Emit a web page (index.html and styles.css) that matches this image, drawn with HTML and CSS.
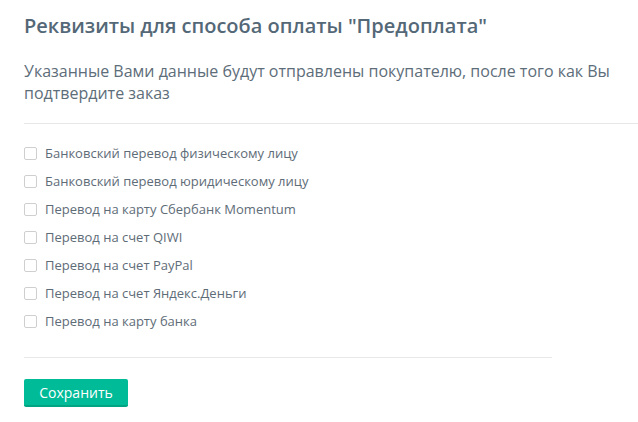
FILE: index.html
```html
<!DOCTYPE html>
<html lang="ru">
<head>
<meta charset="utf-8">
<link rel="stylesheet" href="styles.css">
</head>
<body>
<div class="page">
  <h1 class="title">Реквизиты для способа оплаты "Предоплата"</h1>
  <p class="lead">Указанные Вами данные будут отправлены покупателю, после того как Вы подтвердите заказ</p>
  <hr class="sep sep-full">
  <ul class="options">
    <li class="option"><span class="box"></span><span class="label">Банковский перевод физическому лицу</span></li>
    <li class="option"><span class="box"></span><span class="label">Банковский перевод юридическому лицу</span></li>
    <li class="option"><span class="box"></span><span class="label">Перевод на карту Сбербанк Momentum</span></li>
    <li class="option"><span class="box"></span><span class="label">Перевод на счет QIWI</span></li>
    <li class="option"><span class="box"></span><span class="label">Перевод на счет PayPal</span></li>
    <li class="option"><span class="box"></span><span class="label">Перевод на счет Яндекс.Деньги</span></li>
    <li class="option"><span class="box"></span><span class="label">Перевод на карту банка</span></li>
  </ul>
  <hr class="sep sep-short">
  <button class="save">Сохранить</button>
</div>
</body>
</html>
```
FILE: styles.css
```css
html, body {
  margin: 0;
  padding: 0;
  background: #fff;
}
body {
  font-family: "Open Sans", "Noto Sans", sans-serif;
  color: #5b6b77;
}
.page {
  padding: 12px 0 0 24px;
}
.title {
  margin: 0;
  font-size: 20px;
  font-weight: 600;
  color: #546877;
  line-height: 27px;
}
.lead {
  margin: 21px 0 0;
  font-size: 16px;
  line-height: 22px;
  color: #5d6d79;
  padding-right: 20px;
}
.sep {
  border: 0;
  height: 1px;
  background: #e8e8e8;
  margin: 0;
}
.sep-full {
  margin-top: 19px;
}
.sep-short {
  width: 528px;
  margin-top: 22px;
}
.options {
  list-style: none;
  margin: 15px 0 0;
  padding: 0;
  display: flex;
  flex-direction: column;
}
.option {
  display: flex;
  align-items: center;
  gap: 8px;
  height: 28px;
}
.box {
  width: 11px;
  height: 11px;
  border: 1px solid #cfcfcf;
  border-radius: 2px;
  background: #fff;
  flex: none;
}
.label {
  font-size: 13px;
  color: #5e6c77;
}
.save {
  margin-top: 21px;
  width: 104px;
  height: 28px;
  border: 0;
  border-bottom: 2px solid #00a382;
  border-radius: 2px;
  background: #00bb98;
  color: #fff;
  font-family: "Open Sans", "Noto Sans", sans-serif;
  font-size: 14px;
  padding: 0;
  cursor: pointer;
}
```
